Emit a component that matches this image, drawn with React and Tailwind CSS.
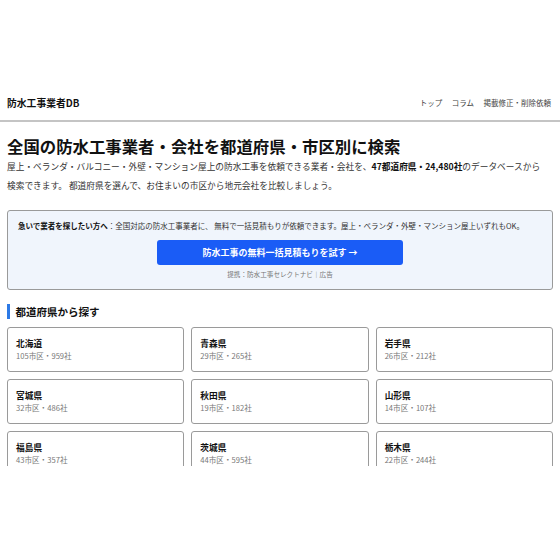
import React from "react";

const PREFS = [
  { name: "北海道", wards: 105, firms: 959 },
  { name: "青森県", wards: 29, firms: 265 },
  { name: "岩手県", wards: 26, firms: 212 },
  { name: "宮城県", wards: 32, firms: 486 },
  { name: "秋田県", wards: 19, firms: 182 },
  { name: "山形県", wards: 14, firms: 107 },
  { name: "福島県", wards: 43, firms: 357 },
  { name: "茨城県", wards: 44, firms: 595 },
  { name: "栃木県", wards: 22, firms: 244 },
];

const font = {
  fontFamily:
    '"Noto Sans CJK JP", "Noto Sans", "Liberation Sans", sans-serif',
};

export default function App() {
  return (
    <div className="w-[560px] h-[560px] bg-white overflow-hidden pt-[86px]" style={font}>
      <div className="h-[380px] overflow-hidden text-[#222]">
        {/* HEADER */}
        <header className="h-[36px] flex items-center justify-between px-[7px] border-b-2 border-[#c4c4c4]">
          <span className="text-[9.8px] font-bold text-[#111]">防水工事業者DB</span>
          <nav className="flex gap-[9.5px] text-[7.5px] text-[#444] pr-[2px]">
            <span>トップ</span>
            <span>コラム</span>
            <span>掲載修正・削除依頼</span>
          </nav>
        </header>

        <main className="px-[7px] pt-[13px]">
          {/* INTRO */}
          <h1 className="text-[16.4px] leading-[22px] font-bold text-[#111]">
            全国の防水工事業者・会社を都道府県・市区別に検索
          </h1>
          <p className="text-[8.7px] leading-[19px] text-[#333]">
            屋上・ベランダ・バルコニー・外壁・マンション屋上の防水工事を依頼できる業者・会社を、
            <b className="text-[#111]">47都道府県・24,480社</b>
            のデータベースから
            <br />
            検索できます。 都道府県を選んで、お住まいの市区から地元会社を比較しましょう。
          </p>

          {/* CTA BOX */}
          <div className="mt-[15px] bg-[#f0f5fc] border border-[#9a9a9a] rounded-[3px] px-[10px] pt-[9px] pb-[10px]">
            <p className="text-[7.5px] leading-[12px] text-[#333]">
              <b className="text-[#111]">急いで業者を探したい方へ</b>
              ：全国対応の防水工事業者に、 無料で一括見積もりが依頼できます。屋上・ベランダ・外壁・マンション屋上いずれもOK。
            </p>
            <div className="flex justify-center mt-[8px]">
              <button className="w-[246px] h-[25px] bg-[#1a5cf6] rounded-[3px] text-white text-[9px] font-bold">
                防水工事の無料一括見積もりを試す →
              </button>
            </div>
            <p className="text-center text-[6.6px] leading-[10px] text-[#777] mt-[4px]">
              提携：防水工事セレクトナビ｜広告
            </p>
          </div>

          {/* PREFECTURES */}
          <h2 className="mt-[14px] h-[15px] flex items-center gap-[6px] text-[10.5px] font-bold text-[#111]">
            <span className="w-[2.5px] h-[15px] bg-[#2d7ae6]" />
            都道府県から探す
          </h2>
          <div className="mt-[8px] grid grid-cols-3 gap-[7px]">
            {PREFS.map((p) => (
              <PrefCard key={p.name} {...p} />
            ))}
          </div>
        </main>
      </div>
    </div>
  );
}

/* ===== PREFECTURE CARD ===== */
const PrefCard = ({ name, wards, firms }) => (
  <div className="h-[45px] border border-[#9a9a9a] rounded-[3px] bg-white px-[8px] pt-[9px]">
    <p className="text-[8.7px] leading-[13px] font-bold text-[#111]">{name}</p>
    <p className="text-[7.6px] leading-[12px] text-[#777]">
      {wards}市区・{firms}社
    </p>
  </div>
);
